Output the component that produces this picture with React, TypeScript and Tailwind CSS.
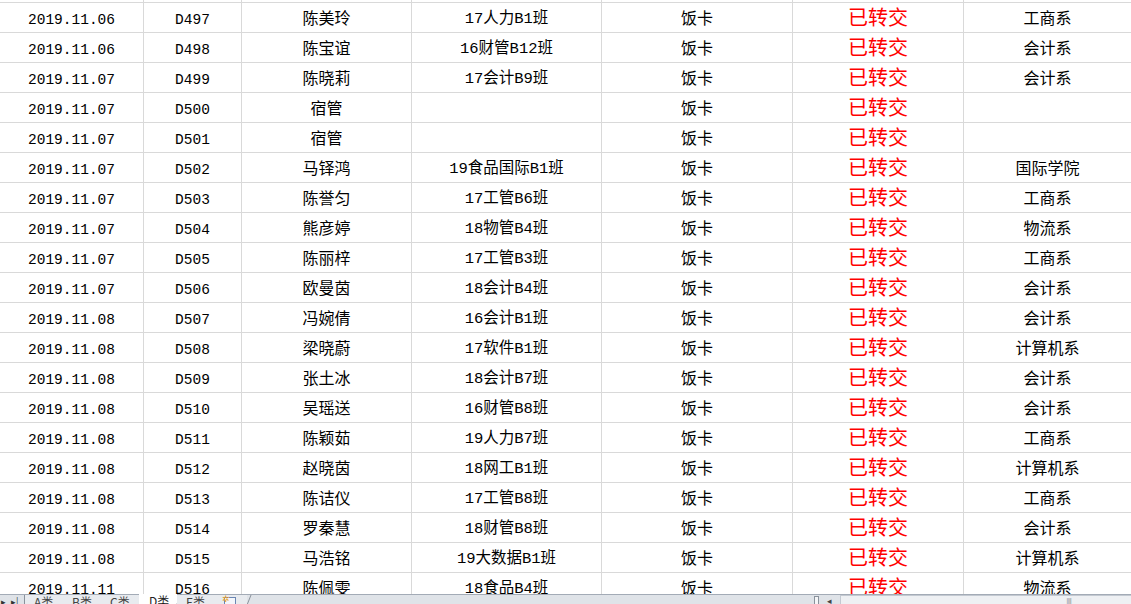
import React from "react";

type Row = {
  date: string;
  id: string;
  name: string;
  cls: string;
  dept: string;
};

const rows: Row[] = [
  { date: "2019.11.06", id: "D497", name: "陈美玲", cls: "17人力B1班", dept: "工商系" },
  { date: "2019.11.06", id: "D498", name: "陈宝谊", cls: "16财管B12班", dept: "会计系" },
  { date: "2019.11.07", id: "D499", name: "陈晓莉", cls: "17会计B9班", dept: "会计系" },
  { date: "2019.11.07", id: "D500", name: "宿管", cls: "", dept: "" },
  { date: "2019.11.07", id: "D501", name: "宿管", cls: "", dept: "" },
  { date: "2019.11.07", id: "D502", name: "马铎鸿", cls: "19食品国际B1班", dept: "国际学院" },
  { date: "2019.11.07", id: "D503", name: "陈誉匀", cls: "17工管B6班", dept: "工商系" },
  { date: "2019.11.07", id: "D504", name: "熊彦婷", cls: "18物管B4班", dept: "物流系" },
  { date: "2019.11.07", id: "D505", name: "陈丽梓", cls: "17工管B3班", dept: "工商系" },
  { date: "2019.11.07", id: "D506", name: "欧曼茵", cls: "18会计B4班", dept: "会计系" },
  { date: "2019.11.08", id: "D507", name: "冯婉倩", cls: "16会计B1班", dept: "会计系" },
  { date: "2019.11.08", id: "D508", name: "梁晓蔚", cls: "17软件B1班", dept: "计算机系" },
  { date: "2019.11.08", id: "D509", name: "张土冰", cls: "18会计B7班", dept: "会计系" },
  { date: "2019.11.08", id: "D510", name: "吴瑶送", cls: "16财管B8班", dept: "会计系" },
  { date: "2019.11.08", id: "D511", name: "陈颖茹", cls: "19人力B7班", dept: "工商系" },
  { date: "2019.11.08", id: "D512", name: "赵晓茵", cls: "18网工B1班", dept: "计算机系" },
  { date: "2019.11.08", id: "D513", name: "陈诘仪", cls: "17工管B8班", dept: "工商系" },
  { date: "2019.11.08", id: "D514", name: "罗秦慧", cls: "18财管B8班", dept: "会计系" },
  { date: "2019.11.08", id: "D515", name: "马浩铭", cls: "19大数据B1班", dept: "计算机系" },
  { date: "2019.11.11", id: "D516", name: "陈佩雯", cls: "18食品B4班", dept: "物流系" },
];

const cell =
  "h-full border-r border-[#d9d9d9] flex items-center justify-center whitespace-nowrap";

const tabs = ["A类", "B类", "C类", "D类", "E类"];

const Slash = () => (
  <svg width="10" height="20" className="absolute -right-[5px] top-0" viewBox="0 0 10 20">
    <line x1="9" y1="0" x2="1" y2="20" stroke="#8a929c" strokeWidth="1" />
  </svg>
);

const App = () => {
  return (
    <main
      className="w-[1131px] h-[604px] overflow-hidden bg-white flex flex-col text-black"
      style={{ fontFamily: '"Liberation Mono", "Noto Sans CJK SC", monospace' }}
    >
      <div className="h-[594px] overflow-hidden shrink-0">
        <div className="h-[3px] border-b border-[#d9d9d9] flex">
          <div className="w-[144px] h-full border-r border-[#d9d9d9]" />
          <div className="w-[98px] h-full border-r border-[#d9d9d9]" />
          <div className="w-[170px] h-full border-r border-[#d9d9d9]" />
          <div className="w-[190px] h-full border-r border-[#d9d9d9]" />
          <div className="w-[191px] h-full border-r border-[#d9d9d9]" />
          <div className="w-[171px] h-full border-r border-[#d9d9d9]" />
        </div>
        {rows.map((r) => (
          <div key={r.id} className="h-[30px] border-b border-[#d9d9d9] flex shrink-0">
            <div className={`${cell} pt-[6px] w-[144px] text-[14.5px]`}>{r.date}</div>
            <div className={`${cell} pt-[6px] w-[98px] text-[14.5px]`}>{r.id}</div>
            <div className={`${cell} pt-[4px] w-[170px] text-[16px]`}>{r.name}</div>
            <div className={`${cell} pt-[4px] w-[190px] text-[15.5px]`}>{r.cls}</div>
            <div className={`${cell} pt-[4px] w-[191px] text-[16px]`}>饭卡</div>
            <div className={`${cell} pt-[4px] w-[171px] text-[20px] text-[#ff0000]`}>已转交</div>
            <div className={`${cell} pt-[4px] flex-1 border-r-0 text-[16px]`}>{r.dept}</div>
          </div>
        ))}
      </div>

      <div
        className="h-[22px] shrink-0 border-t border-[#a3abb6] bg-[#dfe3e8] flex text-[12px] leading-[14px] text-[#222]"
        style={{ fontFamily: '"Noto Sans CJK SC", sans-serif' }}
      >
        <div className="w-[25px] flex items-start gap-[5px] pl-[1px] text-[9px] text-[#333] border-r border-[#8a929c]">
          <span>▸</span>
          <span>▸|</span>
        </div>
        {tabs.map((t, i) => (
          <div
            key={t}
            className={
              i === 3
                ? "relative w-[38px] pl-[10px] bg-white -mt-px"
                : "relative w-[38px] pl-[9px] bg-[#e8ebef] text-[#444]"
            }
          >
            {t}
            <Slash />
          </div>
        ))}
        <div className="relative w-[32px] pl-[9px] bg-[#e8ebef]">
          <div className="mt-[2px] w-[12px] h-[10px] border border-[#6b86b3] bg-[#f3f6fb] relative">
            <span className="absolute -left-[3px] -top-[4px] text-[9px] leading-[9px] text-[#e8a020]">✲</span>
          </div>
          <Slash />
        </div>
        <div className="flex-1" />
        <div className="w-[5px] h-[10px] mt-[1px] border border-[#8a929c] bg-[#f4f5f7]" />
        <div className="w-[21px] flex justify-center text-[9px] leading-[12px] text-[#444]">◂</div>
        <div className="w-[291px] border-l border-t border-[#c3c9d1] bg-[#eef0f3] flex justify-end pr-[60px]">
          <span className="text-[8px] leading-[10px] text-[#7d8590] tracking-[-1px] mt-[1px]">||||</span>
        </div>
      </div>
    </main>
  );
};

export default App;
